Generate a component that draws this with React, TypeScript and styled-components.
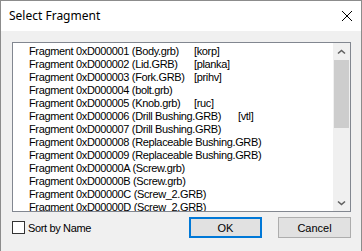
import React from 'react';
import styled, { createGlobalStyle } from 'styled-components';

const GlobalStyle = createGlobalStyle`
  html, body {
    margin: 0;
    padding: 0;
    background: #ffffff;
  }
  * {
    box-sizing: border-box;
  }
`

const Window = styled.div`
  width: 362px;
  height: 251px;
  border: 1px solid #8c8c8c;
  border-bottom: none;
  display: flex;
  flex-direction: column;
  background: #f0f0f0;
  overflow: hidden;
`

const TitleBar = styled.div`
  height: 30px;
  background: #ffffff;
  display: flex;
  align-items: center;
  justify-content: space-between;
  padding: 0 9px 0 8px;
`

const Title = styled.span`
  font-family: "Noto Sans", "Open Sans", sans-serif;
  font-size: 12px;
  color: #000000;
  margin-top: -1px;
`

const CloseGlyph = styled.svg`
  width: 10px;
  height: 10px;
  display: block;
`

const Body = styled.div`
  flex: 1;
  display: flex;
  flex-direction: column;
  padding: 11px 10px 0 11px;
  font-family: "Liberation Sans", Arial, sans-serif;
  font-size: 11px;
  letter-spacing: -0.35px;
  color: #000000;
`

const ListBox = styled.div`
  height: 170px;
  border: 1px solid #828790;
  background: #ffffff;
  display: flex;
`

const Items = styled.div`
  flex: 1;
  overflow: hidden;
  padding: 2px 0 0 16px;
`

const Row = styled.div`
  height: 13px;
  line-height: 13px;
  white-space: nowrap;
`

const Name = styled.span<{ $tab: number }>`
  display: inline-block;
  min-width: ${({ $tab }) => $tab}px;
`

const Scrollbar = styled.div`
  width: 17px;
  background: #f0f0f0;
  display: flex;
  flex-direction: column;
`

const ArrowButton = styled.div`
  height: 17px;
  display: flex;
  align-items: center;
  justify-content: center;
`

const Track = styled.div`
  flex: 1;
  padding: 0 1px;
`

const Thumb = styled.div`
  height: 68px;
  background: #cdcdcd;
`

const Footer = styled.div`
  margin-top: 5px;
  height: 21px;
  display: flex;
  align-items: center;
`

const CheckLabel = styled.label`
  display: flex;
  align-items: center;
  gap: 3px;
  flex: 1;
`

const CheckBox = styled.span`
  width: 13px;
  height: 13px;
  border: 1px solid #333333;
  background: #ffffff;
`

const Buttons = styled.div`
  display: flex;
  gap: 16px;
`

const Button = styled.div<{ $default?: boolean }>`
  width: 73px;
  height: 21px;
  display: flex;
  align-items: center;
  justify-content: center;
  background: #e1e1e1;
  border: ${({ $default }) => ($default ? '2px solid #0078d7' : '1px solid #adadad')};
  letter-spacing: 0;
`

interface Fragment {
  id: string;
  file: string;
  tag?: string;
  tab?: number;
}

const fragments: Fragment[] = [
  { id: '0xD000001', file: 'Body.grb', tag: 'korp' },
  { id: '0xD000002', file: 'Lid.GRB', tag: 'planka' },
  { id: '0xD000003', file: 'Fork.GRB', tag: 'prihv' },
  { id: '0xD000004', file: 'bolt.grb' },
  { id: '0xD000005', file: 'Knob.grb', tag: 'ruc' },
  { id: '0xD000006', file: 'Drill Bushing.GRB', tag: 'vtl', tab: 209 },
  { id: '0xD000007', file: 'Drill Bushing.GRB' },
  { id: '0xD000008', file: 'Replaceable Bushing.GRB' },
  { id: '0xD000009', file: 'Replaceable Bushing.GRB' },
  { id: '0xD00000A', file: 'Screw.grb' },
  { id: '0xD00000B', file: 'Screw.grb' },
  { id: '0xD00000C', file: 'Screw_2.GRB' },
  { id: '0xD00000D', file: 'Screw_2.GRB' },
];

const Chevron = ({ down }: { down?: boolean }) => (
  <svg width="9" height="6" viewBox="0 0 9 6">
    <path
      d={down ? 'M1 1.5 L4.5 4.5 L8 1.5' : 'M1 4.5 L4.5 1.5 L8 4.5'}
      fill="none"
      stroke="#606060"
      strokeWidth="1.6"
    />
  </svg>
);

const App: React.FC = () => {
  return (
    <>
      <GlobalStyle />
      <Window>
        <TitleBar>
          <Title>Select Fragment</Title>
          <CloseGlyph viewBox="0 0 10 10">
            <path d="M0 0 L10 10 M10 0 L0 10" stroke="#000" strokeWidth="1" />
          </CloseGlyph>
        </TitleBar>
        <Body>
          <ListBox>
            <Items>
              {fragments.map((f) => (
                <Row key={f.id}>
                  <Name $tab={f.tab ?? 165}>
                    Fragment {f.id} ({f.file})
                  </Name>
                  {f.tag && `[${f.tag}]`}
                </Row>
              ))}
            </Items>
            <Scrollbar>
              <ArrowButton>
                <Chevron />
              </ArrowButton>
              <Track>
                <Thumb />
              </Track>
              <ArrowButton>
                <Chevron down />
              </ArrowButton>
            </Scrollbar>
          </ListBox>
          <Footer>
            <CheckLabel>
              <CheckBox />
              Sort by Name
            </CheckLabel>
            <Buttons>
              <Button $default>OK</Button>
              <Button>Cancel</Button>
            </Buttons>
          </Footer>
        </Body>
      </Window>
    </>
  );
};

export default App;
